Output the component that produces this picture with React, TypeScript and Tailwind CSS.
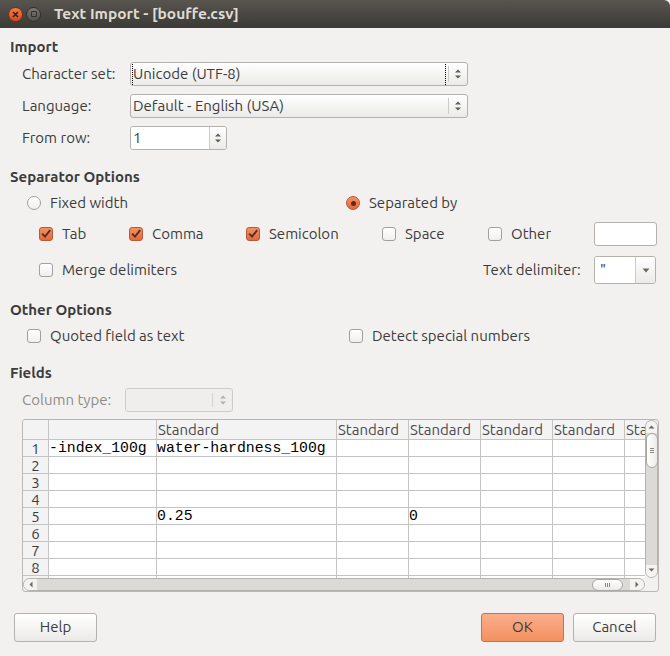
import React from "react";

function UpDown({ color = "#5f5d59" }: { color?: string }) {
  return (
    <svg width="8" height="12" viewBox="0 0 8 12">
      <path d="M1 4.5 L4 1.5 L7 4.5 Z" fill={color} />
      <path d="M1 7.5 L4 10.5 L7 7.5 Z" fill={color} />
    </svg>
  );
}

function Down({ color = "#6b6966" }: { color?: string }) {
  return (
    <svg width="8" height="5" viewBox="0 0 8 5">
      <path d="M0.5 0.5 L7.5 0.5 L4 4.5 Z" fill={color} />
    </svg>
  );
}

function Combo({ value, focus }: { value: string; focus?: boolean }) {
  return (
    <div className="relative flex h-[24px] w-[338px] items-center rounded-[3px] border border-[#b5b2ad] bg-gradient-to-b from-white to-[#ebeae8]">
      <div className="flex-1 pl-[2px] leading-[22px]">{value}</div>
      <div className="h-[16px] w-px bg-[#cdcbc7]" />
      <div className="flex w-[18px] justify-center">
        <UpDown />
      </div>
      {focus ? <div className="absolute left-[1px] top-[1px] h-[21px] w-[314px] border-x border-dotted border-black" /> : null}
    </div>
  );
}

function Check({ checked }: { checked?: boolean }) {
  if (checked)
    return (
      <div className="flex h-[14px] w-[14px] shrink-0 items-center justify-center rounded-[3px] border border-[#b35b38] bg-gradient-to-b from-[#f6905f] to-[#e5673a]">
        <svg width="12" height="12" viewBox="0 0 12 12">
          <path d="M2.2 5.6 L5 8.6 L10.2 2.2" fill="none" stroke="#4b3127" strokeWidth="1.9" />
        </svg>
      </div>
    );
  return <div className="h-[14px] w-[14px] shrink-0 rounded-[3px] border border-[#a3a09c] bg-gradient-to-b from-white to-[#efefef]" />;
}

function Radio({ checked }: { checked?: boolean }) {
  if (checked)
    return (
      <div className="flex h-[14px] w-[14px] shrink-0 items-center justify-center rounded-full border border-[#b35b38] bg-gradient-to-b from-[#f6905f] to-[#e5673a]">
        <div className="h-[5px] w-[5px] rounded-full bg-[#5a2e1e]" />
      </div>
    );
  return <div className="h-[14px] w-[14px] shrink-0 rounded-full border border-[#a3a09c] bg-gradient-to-b from-white to-[#efefef]" />;
}

function Heading({ children, className }: { children: React.ReactNode; className: string }) {
  return <div className={"h-[18px] font-bold leading-[18px] " + className}>{children}</div>;
}

const cols = [
  { w: "w-[108px]", head: "" },
  { w: "w-[180px]", head: "Standard" },
  { w: "w-[72px]", head: "Standard" },
  { w: "w-[72px]", head: "Standard" },
  { w: "w-[72px]", head: "Standard" },
  { w: "w-[72px]", head: "Standard" },
  { w: "w-[72px]", head: "Standard" },
];

const rows: string[][] = [
  ["-index_100g", "water-hardness_100g", "", "", "", "", ""],
  ["", "", "", "", "", "", ""],
  ["", "", "", "", "", "", ""],
  ["", "", "", "", "", "", ""],
  ["", "0.25", "", "0", "", "", ""],
  ["", "", "", "", "", "", ""],
  ["", "", "", "", "", "", ""],
  ["", "", "", "", "", "", ""],
  ["", "", "", "", "", "", ""],
];

function Grid() {
  return (
    <div className="w-[622px] shrink-0 overflow-hidden">
      <div className="flex h-[20px] w-max border-b border-[#c4c4c4] bg-[#f3f3f3] text-[#4a4a4a]">
        <div className="w-[26px] shrink-0 border-r border-[#c4c4c4]" />
        {cols.map((c, i) => (
          <div key={i} className={"shrink-0 overflow-hidden whitespace-nowrap border-r border-[#c4c4c4] pl-[1px] leading-[19px] " + c.w}>
            {c.head}
          </div>
        ))}
      </div>
      {rows.map((r, ri) => (
        <div key={ri} className="flex h-[17px] w-max border-b border-[#c4c4c4]">
          <div className="w-[26px] shrink-0 border-r border-[#c4c4c4] bg-[#f3f3f3] text-center leading-[18px]">{ri + 1}</div>
          {r.map((v, ci) => (
            <div
              key={ci}
              className={"shrink-0 overflow-hidden whitespace-nowrap border-r border-[#c4c4c4] bg-white font-['Liberation_Mono',monospace] text-[14.8px] leading-[17px] text-black " + cols[ci].w}
            >
              {v}
            </div>
          ))}
        </div>
      ))}
    </div>
  );
}

function Table() {
  return (
    <div className="ml-[12px] mt-[7px] flex h-[173px] w-[637px] flex-col overflow-hidden rounded-[3px] border border-[#bab7b2] bg-[#f2f1f0]">
      <div className="flex h-[158px]">
        <Grid />
        <div className="flex w-[13px] flex-col items-center rounded-full border border-[#b5b2ad] bg-[#dcdad6]">
          <div className="flex h-[12px] w-full justify-center rounded-t-full bg-[#f4f3f2] pt-[4px]">
            <svg width="7" height="4" viewBox="0 0 7 4">
              <path d="M0.5 3.5 L3.5 0.5 L6.5 3.5 Z" fill="#6b6966" />
            </svg>
          </div>
          <div className="flex h-[35px] w-[12px] flex-col items-center justify-center gap-[1px] rounded-full border border-[#a9a6a1] bg-gradient-to-r from-white to-[#ecebe9]">
            <div className="h-px w-[4px] bg-[#8a8884]" />
            <div className="h-px w-[4px] bg-[#8a8884]" />
            <div className="h-px w-[4px] bg-[#8a8884]" />
          </div>
          <div className="flex-1" />
          <div className="flex h-[12px] w-full justify-center rounded-b-full bg-[#f4f3f2] pt-[3px]">
            <svg width="7" height="4" viewBox="0 0 7 4">
              <path d="M0.5 0.5 L6.5 0.5 L3.5 3.5 Z" fill="#6b6966" />
            </svg>
          </div>
        </div>
      </div>
      <div className="flex h-[13px]">
        <div className="flex w-[622px] items-center rounded-full border border-[#b5b2ad] bg-[#dcdad6]">
          <div className="flex h-full w-[13px] items-center justify-center rounded-l-full bg-[#f4f3f2]">
            <svg width="4" height="7" viewBox="0 0 4 7">
              <path d="M3.5 0.5 L3.5 6.5 L0.5 3.5 Z" fill="#6b6966" />
            </svg>
          </div>
          <div className="flex-1" />
          <div className="flex h-[12px] w-[31px] items-center justify-center gap-[1px] rounded-full border border-[#a9a6a1] bg-gradient-to-b from-white to-[#ecebe9]">
            <div className="h-[4px] w-px bg-[#8a8884]" />
            <div className="h-[4px] w-px bg-[#8a8884]" />
            <div className="h-[4px] w-px bg-[#8a8884]" />
          </div>
          <div className="w-[7px]" />
          <div className="flex h-full w-[14px] items-center justify-center rounded-r-full bg-[#f4f3f2]">
            <svg width="4" height="7" viewBox="0 0 4 7">
              <path d="M0.5 0.5 L0.5 6.5 L3.5 3.5 Z" fill="#6b6966" />
            </svg>
          </div>
        </div>
        <div className="w-[13px]" />
      </div>
    </div>
  );
}

function Button({ label, primary }: { label: string; primary?: boolean }) {
  return (
    <div
      className={
        "flex h-[29px] w-[83px] items-center justify-center rounded-[3px] border " +
        (primary ? "border-[#c7714d] bg-gradient-to-b from-[#fbae8c] to-[#f2905f]" : "border-[#b5b2ad] bg-gradient-to-b from-white to-[#ebeae8]")
      }
    >
      {label}
    </div>
  );
}

export default function App() {
  return (
    <div className="flex h-[656px] w-[670px] flex-col overflow-hidden bg-[#f2f1f0] font-['Ubuntu','Noto_Sans',sans-serif] text-[15px] text-[#3c3c3c]">
      {/* title bar */}
      <div className="flex h-[28px] shrink-0 items-center rounded-tr-[6px] bg-gradient-to-b from-[#58554f] to-[#3b3a36] pl-[8px]">
        <div className="flex h-[15px] w-[15px] items-center justify-center rounded-full border border-[#7a2f14] bg-gradient-to-b from-[#f37a4b] to-[#d9481a]">
          <svg width="7" height="7" viewBox="0 0 7 7">
            <path d="M1 1 L6 6 M6 1 L1 6" stroke="#3a1f16" strokeWidth="1.6" />
          </svg>
        </div>
        <div className="ml-[3px] flex h-[15px] w-[15px] items-center justify-center rounded-full border border-[#2f2e2b] bg-gradient-to-b from-[#7a7873] to-[#53514d]">
          <div className="h-[6px] w-[6px] rounded-[1px] border-[1.5px] border-[#302f2c]" />
        </div>
        <div className="ml-[13px] text-[15.5px] font-bold text-[#dfdbd2]">Text Import - [bouffe.csv]</div>
      </div>

      <div className="flex flex-col pl-[10px]">
        <Heading className="mt-[10px]">Import</Heading>
        <div className="mt-[6px] flex h-[24px] items-center">
          <div className="w-[120px] pl-[12px]">Character set:</div>
          <Combo value="Unicode (UTF-8)" focus />
        </div>
        <div className="mt-[8px] flex h-[24px] items-center">
          <div className="w-[120px] pl-[12px]">Language:</div>
          <Combo value="Default - English (USA)" />
        </div>
        <div className="mt-[8px] flex h-[24px] items-center">
          <div className="w-[120px] pl-[12px]">From row:</div>
          <div className="flex h-[24px] w-[97px] items-center overflow-hidden rounded-[3px] border border-[#b5b2ad]">
            <div className="h-full flex-1 bg-white pl-[2px] leading-[22px]">1</div>
            <div className="flex h-full w-[17px] items-center justify-center border-l border-[#cdcbc7] bg-gradient-to-b from-white to-[#ebeae8]">
              <UpDown />
            </div>
          </div>
        </div>

        <Heading className="mt-[18px]">Separator Options</Heading>
        <div className="mt-[7px] flex h-[20px] items-center pl-[17px]">
          <div className="flex w-[319px] items-center gap-[9px]">
            <Radio />
            <span>Fixed width</span>
          </div>
          <div className="flex items-center gap-[9px]">
            <Radio checked />
            <span>Separated by</span>
          </div>
        </div>
        <div className="mt-[9px] flex h-[24px] items-center pl-[29px]">
          {[
            { l: "Tab", c: true, w: "w-[90px]" },
            { l: "Comma", c: true, w: "w-[117px]" },
            { l: "Semicolon", c: true, w: "w-[136px]" },
            { l: "Space", c: false, w: "w-[106px]" },
            { l: "Other", c: false, w: "w-[106px]" },
          ].map((o) => (
            <div key={o.l} className={"flex items-center gap-[9px] " + o.w}>
              <Check checked={o.c} />
              <span>{o.l}</span>
            </div>
          ))}
          <div className="h-[24px] w-[63px] rounded-[3px] border border-[#b5b2ad] bg-white" />
        </div>
        <div className="mt-[10px] flex h-[28px] items-center pl-[29px]">
          <div className="flex w-[444px] items-center gap-[9px]">
            <Check />
            <span>Merge delimiters</span>
          </div>
          <div className="w-[97px] whitespace-nowrap">Text delimiter:</div>
          <div className="ml-[14px] flex h-[28px] w-[62px] overflow-hidden rounded-[3px] border border-[#b5b2ad]">
            <div className="flex-1 bg-white pl-[5px] leading-[26px]">"</div>
            <div className="flex w-[20px] items-center justify-center border-l border-[#cdcbc7] bg-gradient-to-b from-white to-[#ebeae8]">
              <Down />
            </div>
          </div>
        </div>

        <Heading className="mt-[17px]">Other Options</Heading>
        <div className="mt-[7px] flex h-[20px] items-center pl-[17px]">
          <div className="flex w-[322px] items-center gap-[9px]">
            <Check />
            <span>Quoted field as text</span>
          </div>
          <div className="flex items-center gap-[9px]">
            <Check />
            <span>Detect special numbers</span>
          </div>
        </div>

        <Heading className="mt-[18px]">Fields</Heading>
        <div className="mt-[6px] flex h-[24px] items-center">
          <div className="w-[115px] pl-[12px] text-[#8e8c88]">Column type:</div>
          <div className="flex h-[24px] w-[108px] items-center rounded-[3px] border border-[#cfccc8] bg-[#efeeec]">
            <div className="flex-1" />
            <div className="h-[14px] w-px bg-[#d6d4d0]" />
            <div className="flex w-[19px] justify-center">
              <UpDown color="#b3b1ad" />
            </div>
          </div>
        </div>
        <Table />
      </div>

      <div className="mt-[21px] flex items-center justify-between px-[14px]">
        <Button label="Help" />
        <div className="flex gap-[9px]">
          <Button label="OK" primary />
          <Button label="Cancel" />
        </div>
      </div>
    </div>
  );
}
